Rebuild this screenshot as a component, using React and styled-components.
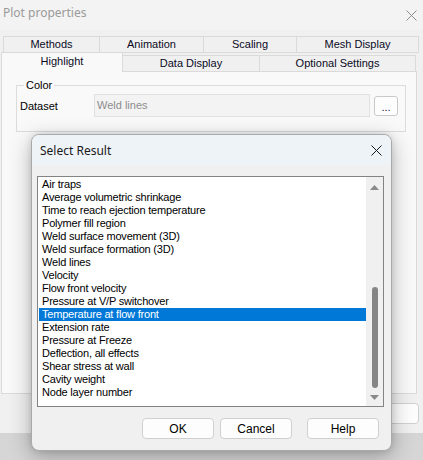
import styled, { createGlobalStyle } from "styled-components";

const GlobalStyle = createGlobalStyle`
	html, body {
		margin: 0;
		padding: 0;
	}
	body {
		width: 423px;
		height: 460px;
		overflow: hidden;
		background: linear-gradient(to bottom, #c2c2c2 0%, #d6d6d6 100%);
		font-family: "Liberation Sans", Arial, sans-serif;
		font-size: 11px;
		color: #000;
	}
`;

const results = [
	"Air traps",
	"Average volumetric shrinkage",
	"Time to reach ejection temperature",
	"Polymer fill region",
	"Weld surface movement (3D)",
	"Weld surface formation (3D)",
	"Weld lines",
	"Velocity",
	"Flow front velocity",
	"Pressure at V/P switchover",
	"Temperature at flow front",
	"Extension rate",
	"Pressure at Freeze",
	"Deflection, all effects",
	"Shear stress at wall",
	"Cavity weight",
	"Node layer number",
];

const topTabs = [
	{ label: "Methods", w: 97 },
	{ label: "Animation", w: 104 },
	{ label: "Scaling", w: 93 },
	{ label: "Mesh Display", w: 122 },
];

const bottomTabs = [
	{ label: "Highlight", w: 122, active: true },
	{ label: "Data Display", w: 137 },
	{ label: "Optional Settings", w: 156 },
];

const CloseIcon = ({ color }) => (
	<svg width="11" height="11" viewBox="0 0 11 11">
		<path d="M0.5 0.5 L10.5 10.5 M10.5 0.5 L0.5 10.5" stroke={color} strokeWidth="1" />
	</svg>
);

const Arrow = ({ down }) => (
	<svg width="9" height="5" viewBox="0 0 9 5">
		<path d={down ? "M0 0 H9 L4.5 5 Z" : "M0 5 H9 L4.5 0 Z"} fill="#8a8a8a" />
	</svg>
);

const App = () => {
	return (
		<Desktop>
			<GlobalStyle />
			<Window>
				<TitleBar>
					<WindowTitle>Plot properties</WindowTitle>
					<CloseIcon color="#8c8c8c" />
				</TitleBar>
				<TabStrip>
					<TabRow $left={3}>
						{topTabs.map((t) => (
							<Tab key={t.label} $w={t.w}>
								{t.label}
							</Tab>
						))}
					</TabRow>
					<TabRow $left={1} $lower>
						{bottomTabs.map((t) => (
							<Tab key={t.label} $w={t.w} $active={t.active} $lower>
								{t.label}
							</Tab>
						))}
					</TabRow>
				</TabStrip>
				<TabPanel>
					<GroupBox>
						<Legend>Color</Legend>
						<FieldRow>
							<FieldLabel>Dataset</FieldLabel>
							<ReadOnlyField>Weld lines</ReadOnlyField>
							<DotsButton>...</DotsButton>
						</FieldRow>
					</GroupBox>
				</TabPanel>
				<WindowFooter>
					<PushButton>OK</PushButton>
				</WindowFooter>
			</Window>

			<Dialog>
				<DialogTitleBar>
					<DialogTitle>Select Result</DialogTitle>
					<CloseIcon color="#1a1a1a" />
				</DialogTitleBar>
				<DialogBody>
					<ListBox>
						<ListItems>
							{results.map((r) => (
								<ListItem key={r} $selected={r === "Temperature at flow front"}>
									{r}
								</ListItem>
							))}
						</ListItems>
						<ScrollBar>
							<Arrow />
							<ScrollTrack>
								<ScrollThumb />
							</ScrollTrack>
							<Arrow down />
						</ScrollBar>
					</ListBox>
					<ButtonRow>
						<PushButton>OK</PushButton>
						<PushButton>Cancel</PushButton>
						<PushButton $gap={15}>Help</PushButton>
					</ButtonRow>
				</DialogBody>
			</Dialog>
		</Desktop>
	);
};
export default App;

const Desktop = styled.div`
	position: relative;
	width: 423px;
	height: 460px;
`;

const Window = styled.div`
	width: 423px;
	height: 433px;
	background: #f0f0f0;
	display: flex;
	flex-direction: column;
`;

const TitleBar = styled.div`
	height: 30px;
	padding: 0 6px 0 3px;
	display: flex;
	align-items: center;
	justify-content: space-between;
	background: #f3f3f3;
`;

const WindowTitle = styled.span`
	font-family: "Segoe UI", "Noto Sans", "Open Sans", sans-serif;
	font-size: 12px;
	color: #9a9a9a;
	margin-top: -6px;
`;

const TabStrip = styled.div`
	margin-top: 6px;
	display: flex;
	flex-direction: column;
`;

const TabRow = styled.div`
	display: flex;
	margin-left: ${(p) => p.$left}px;
	height: ${(p) => (p.$lower ? 19 : 17)}px;
	align-items: flex-start;
`;

const Tab = styled.div`
	box-sizing: border-box;
	width: ${(p) => p.$w}px;
	height: ${(p) => (p.$active ? 20 : 17)}px;
	margin-top: ${(p) => (p.$lower ? (p.$active ? -1 : 2) : 0)}px;
	background: ${(p) => (p.$active ? "#f9f9f9" : "#f0f0f0")};
	border: 1px solid #dadada;
	border-bottom: ${(p) => (p.$active ? "none" : "1px solid #dadada")};
	border-left: ${(p) => (p.$active ? "1px solid #dadada" : "none")};
	position: relative;
	z-index: ${(p) => (p.$active ? 2 : 1)};
	display: flex;
	justify-content: center;
	padding-top: ${(p) => (p.$active ? 2 : 1)}px;
	line-height: 13px;
	color: #0a0a1e;
	&:first-child {
		border-left: 1px solid #dadada;
	}
`;

const TabPanel = styled.div`
	box-sizing: border-box;
	margin-left: 1px;
	width: 416px;
	height: 323px;
	margin-top: -1px;
	background: #f9f9f9;
	border: 1px solid #dadada;
	padding: 7px 0 0 14px;
`;

const GroupBox = styled.fieldset`
	box-sizing: border-box;
	width: 390px;
	height: 53px;
	margin: 0;
	padding: 0 0 0 3px;
	border: 1px solid #dcdcdc;
`;

const Legend = styled.legend`
	padding: 0 2px;
	margin-left: 4px;
	line-height: 13px;
`;

const FieldRow = styled.div`
	display: flex;
	align-items: center;
	margin-top: 2px;
`;

const FieldLabel = styled.span`
	width: 74px;
`;

const ReadOnlyField = styled.div`
	box-sizing: border-box;
	width: 276px;
	height: 23px;
	background: #f3f3f3;
	border: 1px solid #e1e1e1;
	color: #8d8d8d;
	padding: 4px 2px;
	line-height: 13px;
`;

const DotsButton = styled.div`
	box-sizing: border-box;
	width: 24px;
	height: 20px;
	margin-left: 4px;
	border: 1px solid #c9c9c9;
	border-radius: 3px;
	background: #fdfdfd;
	display: flex;
	align-items: center;
	justify-content: center;
	padding-top: 3px;
	color: #202040;
`;

const WindowFooter = styled.div`
	display: flex;
	justify-content: flex-end;
	padding: 9px 4px 0 0;
`;

const PushButton = styled.div`
	box-sizing: border-box;
	width: 72px;
	height: 21px;
	margin-left: ${(p) => p.$gap || 6}px;
	border: 1px solid #d0d0d0;
	border-radius: 4px;
	background: #fdfdfd;
	display: flex;
	align-items: center;
	justify-content: center;
	font-size: 12px;
	color: #000;
`;

const Dialog = styled.div`
	position: absolute;
	left: 31px;
	top: 134px;
	box-sizing: border-box;
	width: 361px;
	height: 317px;
	border: 1px solid #a9a9a9;
	border-radius: 8px;
	overflow: hidden;
	background: #f0f0f0;
	box-shadow: 0 6px 22px rgba(0, 0, 0, 0.28), 0 0 6px rgba(0, 0, 0, 0.12);
	display: flex;
	flex-direction: column;
`;

const DialogTitleBar = styled.div`
	height: 30px;
	background: #eef3f8;
	display: flex;
	align-items: center;
	justify-content: space-between;
	padding: 0 9px 0 8px;
`;

const DialogTitle = styled.span`
	font-family: "Segoe UI", "Noto Sans", "Open Sans", sans-serif;
	font-size: 12px;
	color: #1a1a1a;
`;

const DialogBody = styled.div`
	padding: 11px 7px 0 5px;
	display: flex;
	flex-direction: column;
`;

const ListBox = styled.div`
	box-sizing: border-box;
	height: 231px;
	border: 1px solid #838383;
	background: #fff;
	display: flex;
`;

const ListItems = styled.div`
	flex: 1;
	padding-top: 1px;
	display: flex;
	flex-direction: column;
`;

const ListItem = styled.div`
	height: 13px;
	line-height: 13px;
	padding-left: 3px;
	margin-left: 1px;
	white-space: nowrap;
	letter-spacing: -0.2px;
	background: ${(p) => (p.$selected ? "#0078d7" : "transparent")};
	color: ${(p) => (p.$selected ? "#fff" : "#000")};
`;

const ScrollBar = styled.div`
	width: 17px;
	background: #f0f0f0;
	display: flex;
	flex-direction: column;
	align-items: center;
	padding: 8px 0 6px;
	box-sizing: border-box;
`;

const ScrollTrack = styled.div`
	flex: 1;
	width: 100%;
	display: flex;
	justify-content: center;
	padding: 97px 0 7px;
	box-sizing: border-box;
`;

const ScrollThumb = styled.div`
	width: 6px;
	height: 100%;
	border-radius: 3px;
	background: #858585;
`;

const ButtonRow = styled.div`
	display: flex;
	justify-content: flex-end;
	padding: 11px 5px 0 0;
`;
